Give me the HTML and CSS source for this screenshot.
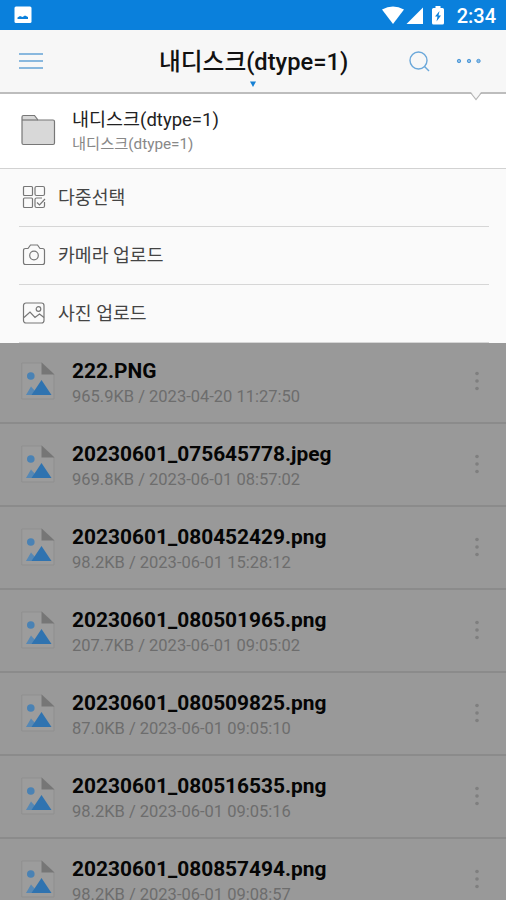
FILE: index.html
```html
<!DOCTYPE html>
<html lang="ko">
<head>
    <meta charset="UTF-8">
    <meta name="viewport" content="width=device-width, initial-scale=1.0">
    <title>내디스크(dtype=1)</title>
    <link rel="stylesheet" href="styles.css">
</head>
<body>

    <!-- Shared icons -->
    <svg class="defs" width="0" height="0">
        <symbol id="file-icon" viewBox="0 0 34 38">
            <path d="M.8 1H21L33 12.500V37H.8z" fill="#9c9c9c" stroke="#8f8f8f" stroke-width="1"/>
            <path d="M20.500 .5V12.500H33.500z" fill="#767676"/>
            <circle cx="9.800" cy="14" r="3.800" fill="#4a82b4"/>
            <path d="M5 33L10 24.500L14 29L12 33z" fill="#5688b5"/>
            <path d="M10.500 33L20.500 18L30.500 33z" fill="#2f73b0"/>
        </symbol>
        <symbol id="more-icon" viewBox="0 0 6 20">
            <circle cx="3" cy="2.500" r="1.800"/>
            <circle cx="3" cy="10" r="1.800"/>
            <circle cx="3" cy="17.500" r="1.800"/>
        </symbol>
    </svg>

    <div class="status-bar">
        <svg class="notice" width="18" height="18" viewBox="0 0 18 18">
            <rect x=".5" y=".5" width="17" height="16.500" rx="1.500" fill="#fff"/>
            <path d="M3.500 13V11.500L6 10L8.500 11L11 9.500L14 11V13z" fill="#0a80dc"/>
        </svg>
        <svg class="signals" width="64" height="19" viewBox="0 0 64 19" fill="#fff">
            <path d="M0 3.500Q11 -2.500 22 3.500L11 18z"/>
            <path d="M41 1.500V18H24.500z"/>
            <path d="M53.500 0H58.500V2H60.500Q62 2 62 3.500V17Q62 18.500 60.500 18.500H51.500Q50 18.500 50 17V3.500Q50 2 51.500 2H53.500z"/>
            <path d="M57.500 5L53 10.500H55.500L54.500 15.500L59 9.500H56.500z" fill="#0a80dc"/>
        </svg>
        <span class="clock">2:34</span>
    </div>

    <header class="header">
        <svg class="menu-icon" width="24" height="18" viewBox="0 0 24 18" stroke="#66a4d6" stroke-width="1.600">
            <path d="M0 2H24M0 9H24M0 16H24"/>
        </svg>
        <h1 class="title">내디스크<span>(dtype=1)</span></h1>
        <svg class="title-arrow" width="6" height="6" viewBox="0 0 6 6">
            <path d="M0 .5H6L3 6z" fill="#1580d4"/>
        </svg>
        <svg class="search-icon" width="21" height="21" viewBox="0 0 21 21" fill="none" stroke="#6ba8da" stroke-width="1.400">
            <circle cx="9.500" cy="9.500" r="8.500"/>
            <path d="M15.500 15.500L20 20"/>
        </svg>
        <svg class="dots-icon" width="26" height="6" viewBox="0 0 26 6" fill="#8dbce5" stroke="#4f9ad9" stroke-width="1">
            <circle cx="3" cy="3" r="1.700"/>
            <circle cx="13" cy="3" r="1.700"/>
            <circle cx="22.500" cy="3" r="1.700"/>
        </svg>
        <svg class="notch" width="12" height="9" viewBox="0 0 12 9">
            <path d="M1 0L6 7L11 0z" fill="#f7f7f7"/>
            <path d="M0 1.500H1.200L6 7.500L10.800 1.500H12" fill="none" stroke="#b5b5b5" stroke-width="1.200"/>
        </svg>
    </header>

    <div class="current">
        <svg width="36" height="32" viewBox="0 0 36 32" stroke="#777" stroke-width="1.200">
            <path d="M2 29V3Q2 1.500 3.500 1.500H14.500L18 6H33Q34.500 6 34.500 7.500V29Q34.500 30.500 33 30.500H3.500Q2 30.500 2 29z" fill="#d8d8d8"/>
            <path d="M2 6H18" fill="none"/>
        </svg>
        <div>
            <div class="current-name">내디스크<span>(dtype=1)</span></div>
            <div class="current-path">내디스크<span>(dtype=1)</span></div>
        </div>
    </div>

    <ul class="actions">
        <li>
            <svg width="24" height="24" viewBox="0 0 24 24" fill="none" stroke="#777" stroke-width="1.200">
                <rect x="1.500" y="1.500" width="9" height="9" rx="1"/>
                <rect x="13" y="1.500" width="9.500" height="9" rx="1.500"/>
                <rect x="1.500" y="13" width="9" height="9.500" rx="1"/>
                <path d="M20 13H14.500Q13 13 13 14.500V21Q13 22.500 14.500 22.500H21Q22.500 22.500 22.500 21V17M15 17.500L17.500 20L23 14"/>
            </svg>
            <span>다중선택</span>
        </li>
        <li>
            <svg width="24" height="24" viewBox="0 0 24 24" fill="none" stroke="#777" stroke-width="1.200">
                <path d="M3.500 5.500H6L8.500 2H15.500L18 5.500H20.500Q22.500 5.500 22.500 7.500V19.500Q22.500 21.500 20.500 21.500H3.500Q1.500 21.500 1.500 19.500V7.500Q1.500 5.500 3.500 5.500z"/>
                <circle cx="12" cy="12.500" r="4.300"/>
            </svg>
            <span>카메라 업로드</span>
        </li>
        <li>
            <svg width="24" height="24" viewBox="0 0 24 24" fill="none" stroke="#777" stroke-width="1.200">
                <rect x="1.500" y="2" width="20.500" height="20" rx="2.500"/>
                <path d="M2 16.500L8 11L13 16.500L17.500 13L22 16.500"/>
                <circle cx="16.500" cy="8" r="2.300"/>
            </svg>
            <span>사진 업로드</span>
        </li>
    </ul>

    <!-- File list, dimmed while the menu is open -->
    <ul class="files">
        <li>
            <svg class="file-icon"><use href="#file-icon"/></svg>
            <div class="info">
                <div class="name">222.PNG</div>
                <div class="meta">965.9KB / 2023-04-20 11:27:50</div>
            </div>
            <svg class="more-icon"><use href="#more-icon"/></svg>
        </li>
        <li>
            <svg class="file-icon"><use href="#file-icon"/></svg>
            <div class="info">
                <div class="name">20230601_075645778.jpeg</div>
                <div class="meta">969.8KB / 2023-06-01 08:57:02</div>
            </div>
            <svg class="more-icon"><use href="#more-icon"/></svg>
        </li>
        <li>
            <svg class="file-icon"><use href="#file-icon"/></svg>
            <div class="info">
                <div class="name">20230601_080452429.png</div>
                <div class="meta">98.2KB / 2023-06-01 15:28:12</div>
            </div>
            <svg class="more-icon"><use href="#more-icon"/></svg>
        </li>
        <li>
            <svg class="file-icon"><use href="#file-icon"/></svg>
            <div class="info">
                <div class="name">20230601_080501965.png</div>
                <div class="meta">207.7KB / 2023-06-01 09:05:02</div>
            </div>
            <svg class="more-icon"><use href="#more-icon"/></svg>
        </li>
        <li>
            <svg class="file-icon"><use href="#file-icon"/></svg>
            <div class="info">
                <div class="name">20230601_080509825.png</div>
                <div class="meta">87.0KB / 2023-06-01 09:05:10</div>
            </div>
            <svg class="more-icon"><use href="#more-icon"/></svg>
        </li>
        <li>
            <svg class="file-icon"><use href="#file-icon"/></svg>
            <div class="info">
                <div class="name">20230601_080516535.png</div>
                <div class="meta">98.2KB / 2023-06-01 09:05:16</div>
            </div>
            <svg class="more-icon"><use href="#more-icon"/></svg>
        </li>
        <li>
            <svg class="file-icon"><use href="#file-icon"/></svg>
            <div class="info">
                <div class="name">20230601_080857494.png</div>
                <div class="meta">98.2KB / 2023-06-01 09:08:57</div>
            </div>
            <svg class="more-icon"><use href="#more-icon"/></svg>
        </li>
    </ul>

</body>
</html>
```
FILE: styles.css
```css
* {
    box-sizing: border-box;
}
body {
    margin: 0;
    height: 900px;
    overflow: hidden;
    display: flex;
    flex-direction: column;
    font-family: Roboto, "Noto Sans CJK KR", sans-serif;
    background-color: #999;
}
svg {
    display: block;
    flex-shrink: 0;
}
ul {
    list-style: none;
    margin: 0;
    padding: 0;
}
.defs {
    position: absolute;
}

.status-bar {
    display: flex;
    align-items: center;
    flex-shrink: 0;
    height: 30px;
    padding: 0 10px 0 14px;
    background-color: #0a80dc;
    color: #fff;
}
.signals {
    margin-left: auto;
}
.clock {
    width: 40px;
    margin-left: 10px;
    padding-top: 2px;
    text-align: right;
    white-space: nowrap;
    font-size: 20px;
    line-height: 28px;
    font-weight: 500;
}

.header {
    position: relative;
    display: flex;
    align-items: center;
    flex-shrink: 0;
    height: 64px;
    padding: 0 23px 0 19px;
    background-color: #f7f7f7;
    border-bottom: 2px solid #bdbdbd;
}
.title {
    flex: 1;
    margin: 0 0 0 116px;
    padding-top: 2px;
    font-size: 23.700px;
    line-height: 32px;
    font-weight: 500;
    white-space: nowrap;
    color: #111;
}
.title-arrow {
    position: absolute;
    left: 250px;
    top: 51px;
}
.dots-icon {
    margin-left: 26px;
    margin-right: 1px;
}
.notch {
    position: absolute;
    left: 470px;
    top: 62px;
}

.current {
    display: flex;
    align-items: center;
    flex-shrink: 0;
    gap: 16px;
    height: 75px;
    padding: 0 20px;
    background-color: #fff;
    border-bottom: 1px solid #d2d2d2;
}
.current svg {
    margin-top: -2px;
}
.current-name {
    font-size: 18.500px;
    line-height: 26px;
    color: #222;
}
.current-path {
    font-size: 15.300px;
    line-height: 22px;
    color: #888;
}

.actions {
    flex-shrink: 0;
    height: 174px;
    padding: 0 17px 0 19px;
    background-color: #fafafa;
}
.actions li {
    display: flex;
    align-items: center;
    gap: 12px;
    height: 58px;
    padding: 0 0 2px 3px;
    border-bottom: 1px solid #d6d6d6;
    font-size: 18.300px;
    color: #444;
}
.actions span {
    padding-bottom: 2px;
}

.files li {
    display: flex;
    align-items: center;
    height: 83px;
    padding: 0 26px 2px 21px;
    border-bottom: 2px solid #8b8b8b;
}
.files li:first-child {
    height: 81px;
    padding-bottom: 4px;
}
.file-icon {
    width: 34px;
    height: 38px;
}
.info {
    flex: 1;
    margin-left: 17px;
    padding-top: 7px;
    white-space: nowrap;
}
.name {
    font-size: 20.900px;
    line-height: 26px;
    font-weight: 700;
    color: #050505;
}
.meta {
    font-size: 16.500px;
    line-height: 26px;
    color: #6d6d6d;
}
.more-icon {
    width: 6px;
    height: 20px;
    fill: #7f7f7f;
}
```
